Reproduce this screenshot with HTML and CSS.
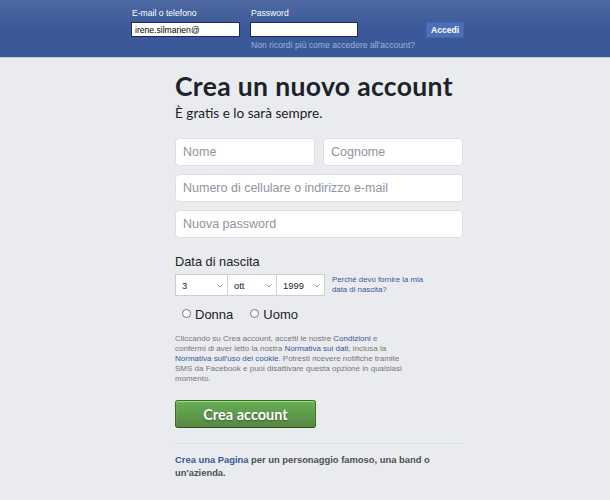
FILE: index.html
```html
<!DOCTYPE html>
<html lang="it">

<head>
    <meta charset="UTF-8">
    <meta name="viewport" content="width=device-width, initial-scale=1.0">
    <title>Facebook - Accedi o iscriviti</title>
    <link rel="stylesheet" href="styles.css">
</head>

<body>
    <header class="topbar">
        <form class="login">
            <div class="login-field">
                <label class="login-label" for="email">E-mail o telefono</label>
                <input class="login-input" id="email" type="text" value="irene.silmarien@">
            </div>
            <div class="login-field login-field-pass">
                <label class="login-label" for="pass">Password</label>
                <input class="login-input" id="pass" type="password">
                <a class="forgot" href="#">Non ricordi più come accedere all'account?</a>
            </div>
            <button class="login-btn" type="button">Accedi</button>
        </form>
    </header>

    <main class="signup">
        <h1 class="signup-title">Crea un nuovo account</h1>
        <p class="signup-sub">È gratis e lo sarà sempre.</p>

        <div class="name-row">
            <input class="field" type="text" placeholder="Nome">
            <input class="field" type="text" placeholder="Cognome">
        </div>
        <input class="field" type="text" placeholder="Numero di cellulare o indirizzo e-mail">
        <input class="field" type="password" placeholder="Nuova password">

        <div class="birthday-label">Data di nascita</div>
        <div class="birthday">
            <span class="select-wrap sel-day">
                <select class="select">
                    <option>3</option>
                </select>
                <svg class="chevron" width="6" height="4" viewBox="0 0 6 4"><path d="M0.5 0.5 L3 3 L5.5 0.5" fill="none" stroke="#90949c" stroke-width="0.9"/></svg>
            </span>
            <span class="select-wrap sel-month">
                <select class="select">
                    <option>ott</option>
                </select>
                <svg class="chevron" width="6" height="4" viewBox="0 0 6 4"><path d="M0.5 0.5 L3 3 L5.5 0.5" fill="none" stroke="#90949c" stroke-width="0.9"/></svg>
            </span>
            <span class="select-wrap sel-year">
                <select class="select">
                    <option>1999</option>
                </select>
                <svg class="chevron" width="6" height="4" viewBox="0 0 6 4"><path d="M0.5 0.5 L3 3 L5.5 0.5" fill="none" stroke="#90949c" stroke-width="0.9"/></svg>
            </span>
            <a class="why" href="#">Perché devo fornire la mia<br>data di nascita?</a>
        </div>

        <div class="gender">
            <label class="gender-opt"><input class="radio" type="radio" name="sex">Donna</label>
            <label class="gender-opt"><input class="radio" type="radio" name="sex">Uomo</label>
        </div>

        <p class="terms">Cliccando su Crea account, accetti le nostre <a href="#">Condizioni</a> e
            confermi di aver letto la nostra <a href="#">Normativa sui dati</a>, inclusa la
            <a href="#">Normativa sull'uso dei cookie</a>. Potresti ricevere notifiche tramite
            SMS da Facebook e puoi disattivare questa opzione in qualsiasi momento.</p>

        <button class="signup-btn" type="button">Crea account</button>

        <hr class="divider">

        <p class="page-link"><a href="#">Crea una Pagina</a> per un personaggio famoso, una band o un'azienda.</p>
    </main>
</body>

</html>
```

FILE: styles.css
```css
body {
    margin: 0;
    background: #e9ebee;
    font-family: "Liberation Sans", Arial, sans-serif;
    color: #1d2129;
    overflow: hidden;
}

a {
    color: #365899;
    text-decoration: none;
}

/* top bar */

.topbar {
    height: 57px;
    background: linear-gradient(#4e69a2, #3b5998 50%);
    border-bottom: 1px solid #c3cbdc;
}

.login {
    display: flex;
    align-items: flex-start;
    margin-left: 131px;
    padding-top: 8px;
}

.login-field {
    display: flex;
    flex-direction: column;
    width: 109px;
}

.login-field-pass {
    width: 108px;
    margin-left: 10px;
}

.login-label {
    font-size: 8.6px;
    line-height: 11px;
    color: #fff;
    margin: 0 0 3px 1px;
}

.login-input {
    box-sizing: border-box;
    height: 15px;
    margin: 0;
    padding: 0 3px;
    border: 1px solid #1d2a5b;
    background: #fff;
    font-family: "Liberation Sans", Arial, sans-serif;
    font-size: 8.6px;
    color: #000;
    outline: none;
}

.forgot {
    margin: 3px 0 0 1px;
    font-size: 8.6px;
    line-height: 11px;
    color: #9cb4d8;
    white-space: nowrap;
}

.login-btn {
    box-sizing: border-box;
    height: 16px;
    margin: 14px 0 0 68px;
    padding: 0 4px;
    border: 1px solid #4267b2;
    background: #4c6fb6;
    color: #fff;
    font-family: "Liberation Sans", Arial, sans-serif;
    font-size: 8.6px;
    font-weight: bold;
    cursor: pointer;
}

/* sign up */

.signup {
    width: 288px;
    margin-left: 175px;
    padding-top: 13px;
}

.signup-title {
    margin: 0;
    font-family: Lato, "Open Sans", sans-serif;
    font-size: 26.5px;
    line-height: 30px;
    font-weight: bold;
    color: #1d2129;
    letter-spacing: 0.35px;
}

.signup-sub {
    margin: 3px 0 0;
    font-family: Lato, "Open Sans", sans-serif;
    font-size: 13.6px;
    line-height: 18px;
    color: #1d2129;
}

.name-row {
    display: flex;
    gap: 8px;
    margin-top: 16px;
}

.field {
    display: block;
    box-sizing: border-box;
    width: 100%;
    height: 28px;
    margin: 8px 0 0;
    padding: 0 7px;
    border: 1px solid #dddfe2;
    border-radius: 4px;
    background: #fff;
    font-family: "Liberation Sans", Arial, sans-serif;
    font-size: 12.5px;
    color: #1d2129;
    outline: none;
}

.name-row .field {
    margin-top: 0;
}

.field::placeholder {
    color: #90949c;
}

.birthday-label {
    margin-top: 16px;
    font-size: 12.8px;
    line-height: 16px;
}

.birthday {
    display: flex;
    align-items: center;
    margin-top: 4px;
}

.select-wrap {
    position: relative;
    display: block;
}

.select {
    display: block;
    box-sizing: border-box;
    height: 22px;
    margin: 0;
    padding: 0 0 0 6px;
    border: 1px solid #ccd0d5;
    border-radius: 0;
    background: #fff;
    font-family: "Liberation Sans", Arial, sans-serif;
    font-size: 9.4px;
    color: #1d2129;
    appearance: none;
    outline: none;
}

.sel-day .select {
    width: 53px;
}

.sel-month .select {
    width: 49px;
    border-left: 0;
}

.sel-year .select {
    width: 48px;
    border-left: 0;
}

.chevron {
    position: absolute;
    right: 5px;
    top: 10px;
}

.why {
    margin-left: 7px;
    font-size: 7.8px;
    line-height: 10px;
}

.gender {
    display: flex;
    margin-top: 11px;
    padding-left: 7px;
}

.gender-opt {
    display: flex;
    align-items: flex-start;
    margin-right: 17px;
    font-size: 13px;
    line-height: 16px;
}

.radio {
    box-sizing: border-box;
    width: 9px;
    height: 9px;
    margin: 2px 4px 0 0;
    border: 1px solid #767676;
    border-radius: 50%;
    background: #fff;
    appearance: none;
}

.terms {
    width: 228px;
    margin: 11px 0 0;
    font-size: 8px;
    line-height: 10px;
    color: #777;
}

.signup-btn {
    display: block;
    box-sizing: border-box;
    width: 141px;
    height: 28px;
    margin-top: 16px;
    padding: 0;
    border: 1px solid #3b6e22;
    border-bottom-color: #2c5115;
    border-radius: 3px;
    background: linear-gradient(#67ae55, #578843);
    box-shadow: inset 0 1px 1px #a4e388;
    color: #fff;
    font-family: Lato, "Open Sans", sans-serif;
    font-size: 14.5px;
    font-weight: bold;
    text-shadow: 0 1px 2px rgba(0, 0, 0, 0.4);
    cursor: pointer;
}

.divider {
    height: 1px;
    margin: 15px 0 0;
    border: 0;
    background: #dadde1;
}

.page-link {
    width: 270px;
    margin: 9px 0 0;
    font-size: 9.4px;
    line-height: 13px;
    font-weight: bold;
    color: #4b4f56;
}
```
